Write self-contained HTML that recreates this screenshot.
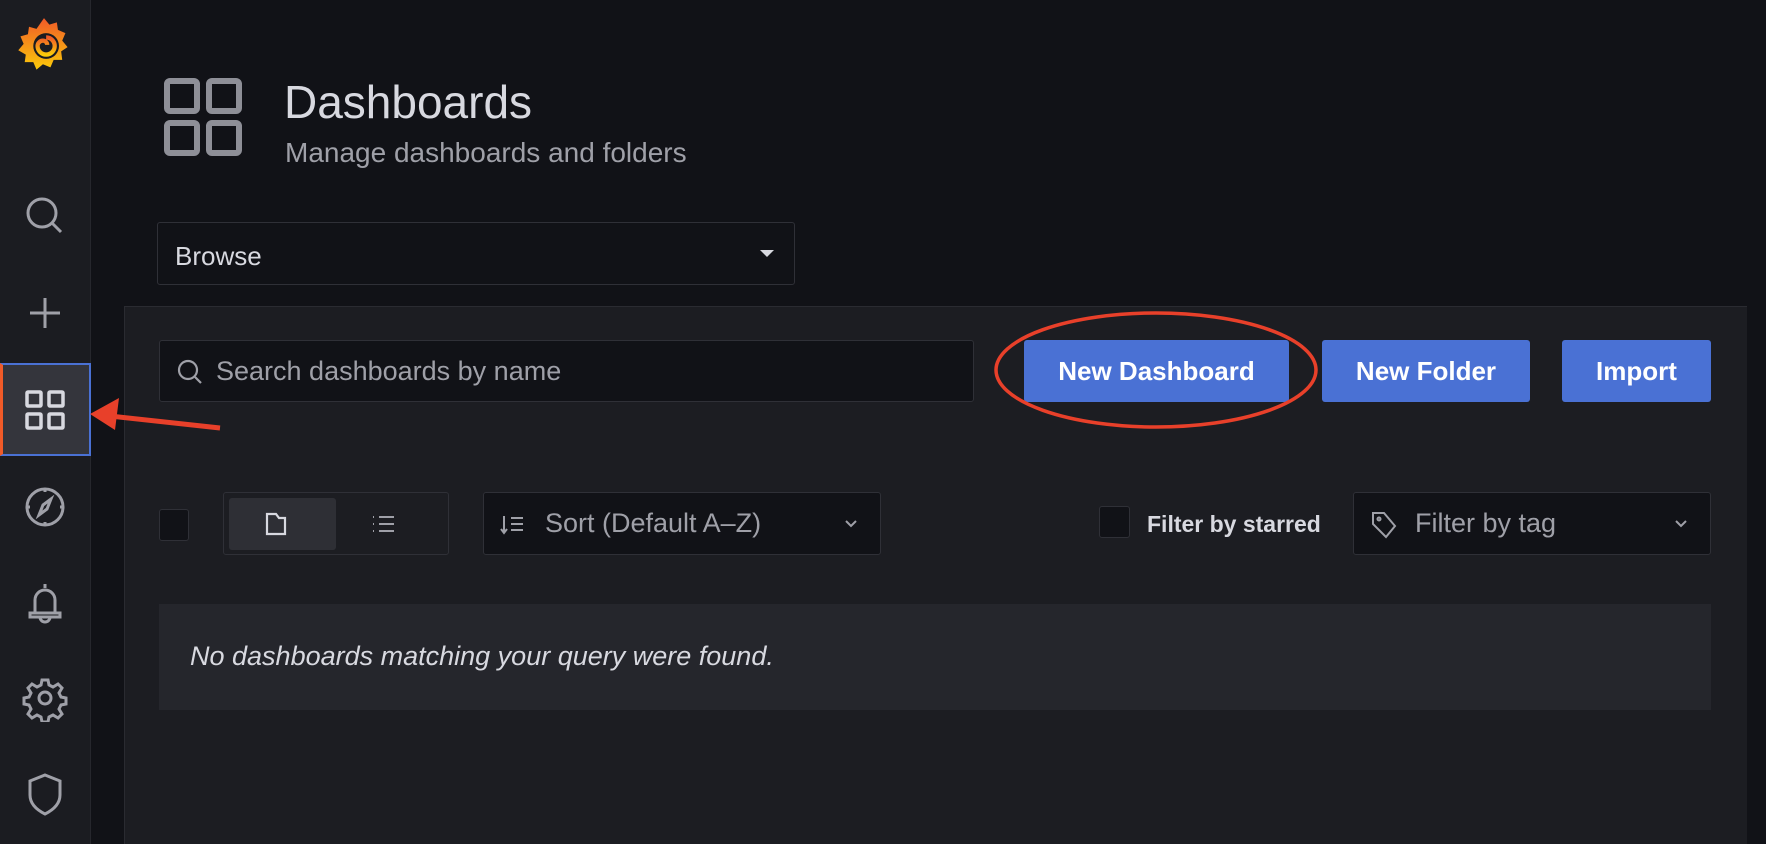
<!DOCTYPE html>
<html><head><meta charset="utf-8"><style>
*{box-sizing:border-box;margin:0;padding:0}
body{width:1766px;height:844px;overflow:hidden;background:#111217;font-family:"Liberation Sans",sans-serif;color:#d8d9e0;position:relative}
.abs{position:absolute}
.side{left:0;top:0;width:91px;height:844px;background:#1b1c21;border-right:1px solid #26272d}
.ic{position:absolute;left:21px;width:48px;height:48px}
.panel{left:124px;top:306px;width:1623px;height:538px;background:#1c1d22;border-top:1px solid #2a2b31;border-left:1px solid #2a2b31}
.inp{background:#111217;border:1px solid #2f3037;border-radius:3px}
.btn{background:#4a71d4;color:#fff;font-weight:bold;font-size:26px;border-radius:3px;display:flex;align-items:center;justify-content:center}
</style></head><body>
<div class="abs side"></div>
<svg class="abs" style="left:15px;top:16px" width="58" height="60" viewBox="0 0 54 56">
<defs><linearGradient id="g" x1="0" y1="0" x2="0" y2="1"><stop offset="0" stop-color="#f05a28"/><stop offset="1" stop-color="#fbca0a"/></linearGradient></defs>
<path d="M27 2l5 6 7-2 1 7 7 3-3 7 5 6-6 4 1 8-8 0-3 7-7-3-6 5-3-7-8 0 1-7-7-4 5-6-3-7 7-2 1-7 7 2z" fill="url(#g)"/>
<circle cx="29" cy="28" r="12" fill="#1b1c21"/>
<path d="M29 20a8 8 0 1 1-8 8a5 5 0 0 1 5-5a4 4 0 0 1 4 4" fill="none" stroke="url(#g)" stroke-width="4"/>
</svg>
<svg class="ic" style="top:192px" viewBox="0 0 48 48" fill="none" stroke="#9fa0a8" stroke-width="3"><circle cx="21" cy="21" r="14"/><path d="M31 31l9 9"/></svg>
<svg class="ic" style="top:289px" viewBox="0 0 48 48" fill="none" stroke="#9fa0a8" stroke-width="3"><path d="M24 9v30M9 24h30"/></svg>
<div class="abs" style="left:0;top:363px;width:91px;height:93px;background:#34353c;border:2px solid #4a71d4;border-left:3px solid #f05a28"></div>
<svg class="ic" style="top:386px" viewBox="0 0 48 48" fill="none" stroke="#d8d9e0" stroke-width="3.5"><rect x="6" y="6" width="14" height="14" rx="1"/><rect x="28" y="6" width="14" height="14" rx="1"/><rect x="6" y="28" width="14" height="14" rx="1"/><rect x="28" y="28" width="14" height="14" rx="1"/></svg>
<svg class="ic" style="top:483px" viewBox="0 0 48 48" fill="none" stroke="#9fa0a8" stroke-width="3"><circle cx="24" cy="24" r="18"/><path d="M30 16l-4 10-8 6 4-10z"/><path d="M24 6v3M24 39v3M6 24h3M39 24h3"/></svg>
<svg class="ic" style="top:579px" viewBox="0 0 48 48" fill="none" stroke="#9fa0a8" stroke-width="3"><path d="M24 5v4M14 34V21a10 10 0 0 1 20 0v13M9 34h30v4H9zM19 38a5 5 0 0 0 10 0"/></svg>
<svg class="ic" style="top:674px" viewBox="0 0 48 48" fill="none" stroke="#9fa0a8" stroke-width="3"><circle cx="24" cy="24" r="6"/><path d="M21 6h6l1 5 4 2 5-3 4 4-3 5 2 4 5 1v6l-5 1-2 4 3 5-4 4-5-3-4 2-1 5h-6l-1-5-4-2-5 3-4-4 3-5-2-4-5-1v-6l5-1 2-4-3-5 4-4 5 3 4-2z"/></svg>
<svg class="ic" style="top:770px" viewBox="0 0 48 48" fill="none" stroke="#9fa0a8" stroke-width="3"><path d="M24 5l15 6v14c0 9-7 15-15 19C16 40 9 34 9 25V11z"/></svg>
<svg class="abs" style="left:163px;top:77px" width="80" height="80" viewBox="0 0 80 80" fill="none" stroke="#8e8f97" stroke-width="6"><rect x="4" y="4" width="30" height="30" rx="3"/><rect x="46" y="4" width="30" height="30" rx="3"/><rect x="4" y="46" width="30" height="30" rx="3"/><rect x="46" y="46" width="30" height="30" rx="3"/></svg>
<div class="abs" style="left:284px;top:75px;font-size:46px;color:#d8d9e0">Dashboards</div>
<div class="abs" style="left:285px;top:137px;font-size:28px;color:#9fa0a8">Manage dashboards and folders</div>
<div class="abs inp" style="left:157px;top:222px;width:638px;height:63px;font-size:26px;padding:18px 0 0 17px">Browse
<div class="abs" style="right:20px;top:27px;width:0;height:0;border-left:7px solid transparent;border-right:7px solid transparent;border-top:7px solid #d8d9e0"></div></div>
<div class="abs panel"></div>
<div class="abs inp" style="left:159px;top:340px;width:815px;height:62px">
<svg class="abs" style="left:16px;top:17px" width="28" height="28" viewBox="0 0 28 28" fill="none" stroke="#9fa0a8" stroke-width="2.2"><circle cx="12" cy="12" r="9"/><path d="M19 19l6 6"/></svg>
<div class="abs" style="left:56px;top:15px;font-size:27px;color:#9fa0a8">Search dashboards by name</div></div>
<div class="abs btn" style="left:1024px;top:340px;width:265px;height:62px">New Dashboard</div>
<div class="abs btn" style="left:1322px;top:340px;width:208px;height:62px">New Folder</div>
<div class="abs btn" style="left:1562px;top:340px;width:149px;height:62px">Import</div>
<svg class="abs" style="left:0;top:0" width="1766" height="844" fill="none">
<ellipse cx="1156" cy="370" rx="160" ry="57" stroke="#e8402a" stroke-width="3.5"/>
<path d="M220 428L110 416" stroke="#e8402a" stroke-width="5"/>
<path d="M90 414l29-16-4 32z" fill="#e8402a"/>
</svg>
<div class="abs inp" style="left:159px;top:509px;width:30px;height:32px"></div>
<div class="abs" style="left:223px;top:492px;width:226px;height:63px;border:1px solid #2f3037;border-radius:3px"></div>
<div class="abs" style="left:229px;top:498px;width:107px;height:52px;background:#2e2f35;border-radius:3px"></div>
<svg class="abs" style="left:262px;top:510px" width="28" height="28" viewBox="0 0 28 28" fill="none" stroke="#d8d9e0" stroke-width="2.2"><path d="M5 4h9l3 4h6v16H5z"/></svg>
<svg class="abs" style="left:370px;top:510px" width="28" height="28" viewBox="0 0 28 28" fill="none" stroke="#9fa0a8" stroke-width="2"><path d="M3 7h1M3 14h1M3 21h1M9 7h15M9 14h15M9 21h15"/></svg>
<div class="abs inp" style="left:483px;top:492px;width:398px;height:63px">
<svg class="abs" style="left:16px;top:20px" width="28" height="24" viewBox="0 0 28 24" fill="none" stroke="#9fa0a8" stroke-width="2"><path d="M4 3v16M1 16l3 4 3-4M11 5h12M11 11h12M11 17h12"/></svg>
<div class="abs" style="left:61px;top:15px;font-size:27px;color:#9fa0a8">Sort (Default A–Z)</div>
<svg class="abs" style="right:22px;top:26px" width="14" height="10" viewBox="0 0 14 10" fill="none" stroke="#9fa0a8" stroke-width="2"><path d="M2 2l5 5 5-5"/></svg></div>
<div class="abs inp" style="left:1099px;top:506px;width:31px;height:32px"></div>
<div class="abs" style="left:1147px;top:511px;font-size:23px;font-weight:bold;color:#d8d9e0">Filter by starred</div>
<div class="abs inp" style="left:1353px;top:492px;width:358px;height:63px">
<svg class="abs" style="left:16px;top:17px" width="28" height="30" viewBox="0 0 28 30" fill="none" stroke="#9fa0a8" stroke-width="2"><path d="M3 3h11l11 13-9 11L3 14z"/><circle cx="9" cy="9" r="1.5"/></svg>
<div class="abs" style="left:61px;top:15px;font-size:27px;color:#9fa0a8">Filter by tag</div>
<svg class="abs" style="right:22px;top:26px" width="14" height="10" viewBox="0 0 14 10" fill="none" stroke="#9fa0a8" stroke-width="2"><path d="M2 2l5 5 5-5"/></svg></div>
<div class="abs" style="left:159px;top:604px;width:1552px;height:106px;background:#25262c"></div>
<div class="abs" style="left:190px;top:641px;font-size:27px;font-style:italic;color:#d8d9e0">No dashboards matching your query were found.</div>
</body></html>
